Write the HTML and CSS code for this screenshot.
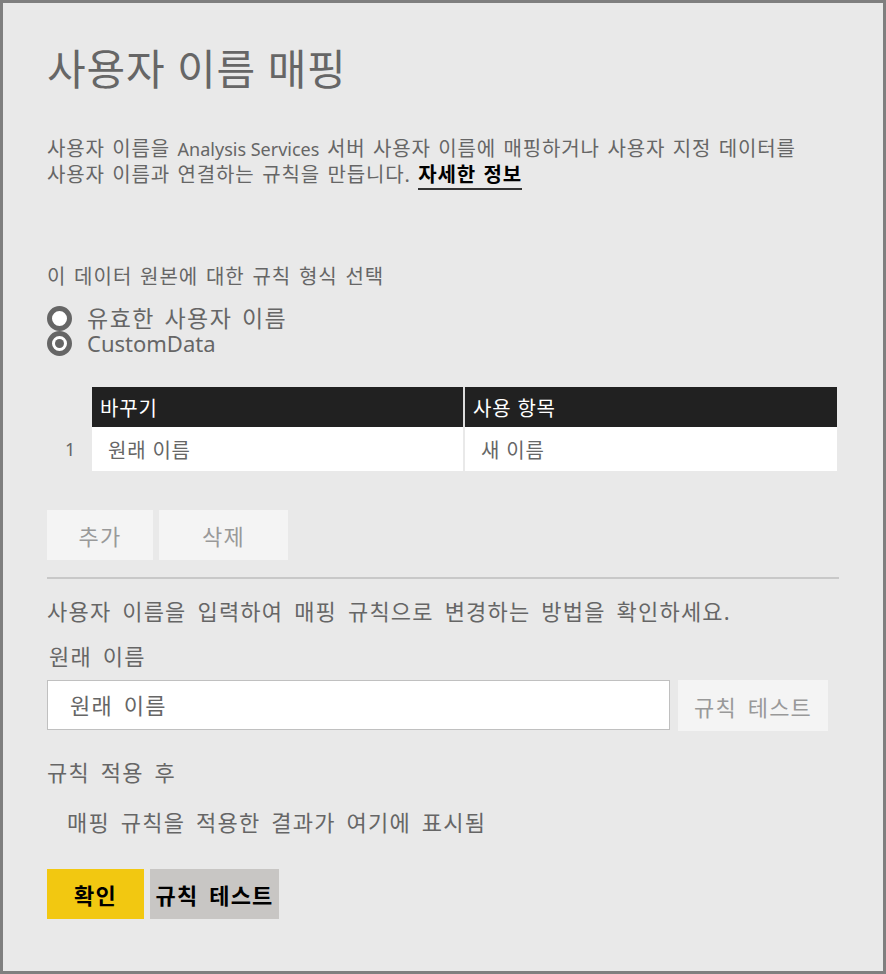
FILE: index.html
```html
<!DOCTYPE html>
<html lang="ko">

<head>
    <meta charset="UTF-8">
    <title>사용자 이름 매핑</title>
    <link rel="stylesheet" href="styles.css">
</head>

<body>
    <div class="dialog">
        <h1 class="dialog-title">사용자 이름 매핑</h1>

        <p class="desc">
            사용자 이름을 <span class="latin">Analysis Services</span> 서버 사용자 이름에 매핑하거나 사용자 지정 데이터를<br>
            사용자 이름과 연결하는 규칙을 만듭니다. <a href="#" class="more-link">자세한 정보</a>
        </p>

        <div class="rule-type">
            <div class="label">이 데이터 원본에 대한 규칙 형식 선택</div>
            <label class="radio">
                <span class="radio-dot"></span>
                <span class="radio-text ko">유효한 사용자 이름</span>
            </label>
            <label class="radio checked">
                <span class="radio-dot"></span>
                <span class="radio-text">CustomData</span>
            </label>
        </div>

        <div class="rule-table">
            <div class="rule-row head">
                <span class="row-num"></span>
                <span class="cell">바꾸기</span>
                <span class="cell">사용 항목</span>
            </div>
            <div class="rule-row">
                <span class="row-num">1</span>
                <span class="cell">원래 이름</span>
                <span class="cell">새 이름</span>
            </div>
        </div>

        <div class="btn-row">
            <button class="btn btn-light btn-add">추가</button>
            <button class="btn btn-light btn-del">삭제</button>
        </div>

        <hr class="divider">

        <div class="text">사용자 이름을 입력하여 매핑 규칙으로 변경하는 방법을 확인하세요.</div>
        <div class="text field-label">원래 이름</div>
        <div class="test-row">
            <input class="name-input" type="text" placeholder="원래 이름">
            <button class="btn btn-light btn-test">규칙 테스트</button>
        </div>

        <div class="text after-label">규칙 적용 후</div>
        <div class="text result">매핑 규칙을 적용한 결과가 여기에 표시됨</div>

        <div class="btn-row footer">
            <button class="btn btn-primary">확인</button>
            <button class="btn btn-gray">규칙 테스트</button>
        </div>
    </div>
</body>

</html>
```

FILE: styles.css
```css
* {
    box-sizing: border-box;
}

body {
    margin: 0;
    font-family: "Noto Sans", "Noto Sans CJK KR", sans-serif;
    color: #666;
}

.dialog {
    width: 886px;
    height: 974px;
    border: 3px solid #7f7f7f;
    background: #e9e9e9;
    padding: 42px 44px 0 44px;
}

.dialog-title {
    margin: 0;
    font-size: 42px;
    font-weight: normal;
    line-height: 48px;
    letter-spacing: 0.8px;
    color: #666;
}

/* 작은 본문 */
.desc,
.rule-type .label,
.rule-row {
    font-size: 20px;
    letter-spacing: 1px;
    word-spacing: 1.5px;
}

.desc {
    margin: 43px 0 0;
    line-height: 25px;
    letter-spacing: 0.85px;
}

.latin {
    font-size: 18px;
    letter-spacing: 0;
    word-spacing: 0;
}

.more-link {
    color: #000;
    font-weight: bold;
    text-decoration: none;
    border-bottom: 2px solid #333;
}

.rule-type {
    margin-top: 78px;
}

.rule-type .label {
    line-height: 24px;
    margin-bottom: 17px;
}

.radio {
    display: flex;
    align-items: center;
    gap: 15px;
    height: 25px;
    line-height: 25px;
    font-size: 22px;
}

.radio-text.ko {
    font-size: 23px;
    letter-spacing: 1.5px;
    word-spacing: 2px;
}

.radio-dot {
    flex: none;
    width: 25px;
    height: 25px;
    border-radius: 50%;
    border: 5px solid #666;
    background: #fff;
    position: relative;
}

.radio.checked .radio-dot::after {
    content: "";
    position: absolute;
    left: 3px;
    top: 3px;
    width: 9px;
    height: 9px;
    border-radius: 50%;
    background: #666;
}

.rule-table {
    margin-top: 31px;
    width: 793px;
}

.rule-row {
    display: flex;
    height: 44px;
    align-items: center;
    letter-spacing: 0.8px;
    word-spacing: 0;
}

.rule-row.head {
    height: 40px;
}

.row-num {
    width: 45px;
    padding-left: 18px;
    font-size: 18px;
}

.cell {
    height: 100%;
    display: flex;
    align-items: center;
    background: #fff;
    padding-left: 16px;
}

.cell:nth-child(2) {
    width: 371px;
}

.cell:nth-child(3) {
    width: 374px;
    border-left: 2px solid #e9e9e9;
}

.head .cell {
    background: #212121;
    color: #fff;
    padding-left: 8px;
}

.head .cell:nth-child(3) {
    border-left-color: #ddd;
}

/* 큰 본문 */
.text,
.btn,
.name-input {
    font-family: inherit;
    font-size: 22px;
    letter-spacing: 1.2px;
    word-spacing: 4px;
}

.btn-row {
    display: flex;
    gap: 6px;
    margin-top: 39px;
}

.btn {
    border: none;
    height: 50px;
    padding: 0;
}

.btn-light {
    background: #f4f4f4;
    color: #999;
}

.btn-add {
    width: 106px;
}

.btn-del {
    width: 129px;
}

.divider {
    margin: 17px 0 0;
    width: 792px;
    border: none;
    height: 2px;
    background: #c8c8c8;
}

.text {
    line-height: 28px;
}

.divider + .text {
    margin-top: 18px;
}

.field-label {
    margin-top: 17px;
    padding-left: 2px;
}

.test-row {
    display: flex;
    gap: 8px;
    margin-top: 10px;
}

.name-input {
    width: 623px;
    height: 50px;
    border: 1px solid #c0c0c0;
    background: #fff;
    padding: 0 22px;
    color: #666;
}

.name-input::placeholder {
    color: #666;
}

.btn-test {
    width: 150px;
    height: 51px;
}

.after-label {
    margin-top: 27px;
}

.result {
    margin-top: 22px;
    padding-left: 20px;
}

.footer {
    margin-top: 33px;
}

.btn-primary {
    width: 97px;
    background: #f2c811;
    color: #000;
    font-weight: bold;
}

.btn-gray {
    width: 129px;
    background: #c8c6c4;
    color: #000;
    font-weight: bold;
}
```
